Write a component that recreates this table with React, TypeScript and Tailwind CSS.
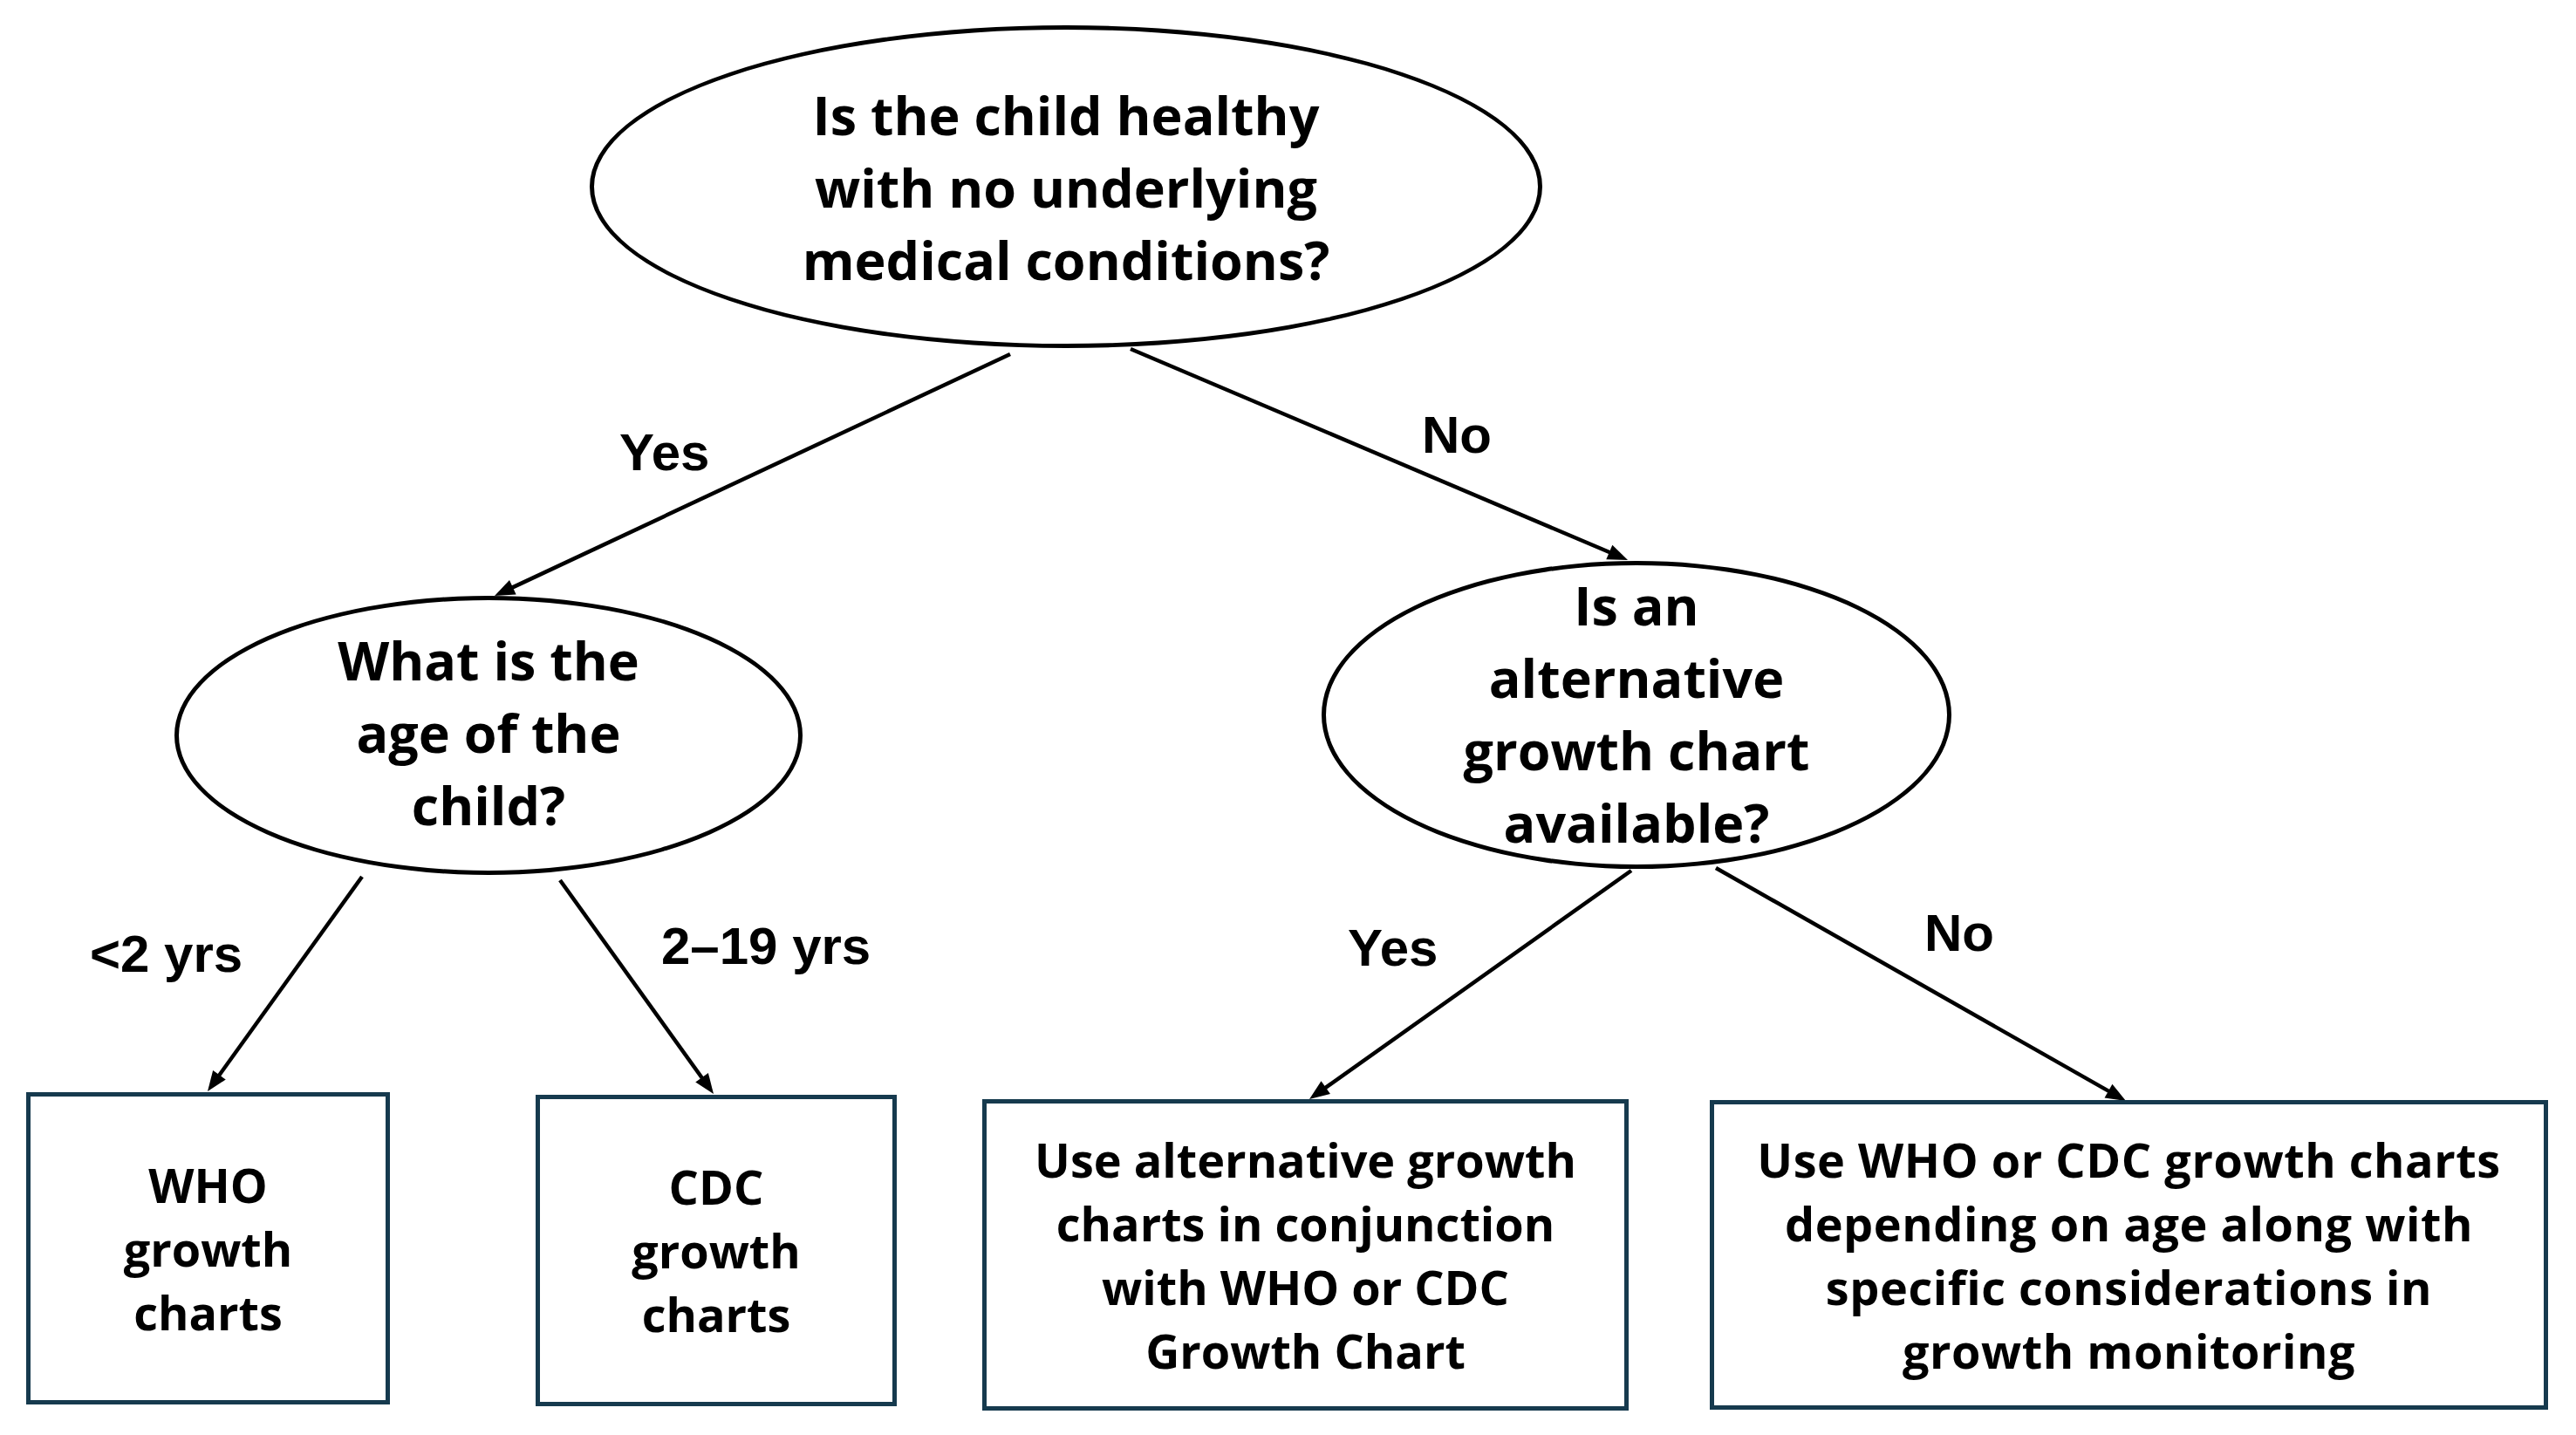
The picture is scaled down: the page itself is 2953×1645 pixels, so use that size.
import React from "react";

type Pt = { x1: number; y1: number; x2: number; y2: number };

const arrows: Pt[] = [
  { x1: 1158, y1: 406, x2: 567, y2: 683 },
  { x1: 1296, y1: 400, x2: 1866, y2: 642 },
  { x1: 415, y1: 1005, x2: 238, y2: 1251 },
  { x1: 642, y1: 1009, x2: 818, y2: 1254 },
  { x1: 1870, y1: 998, x2: 1501, y2: 1260 },
  { x1: 1967, y1: 995, x2: 2437, y2: 1262 },
];

function Arrow({ x1, y1, x2, y2 }: Pt) {
  const dx = x2 - x1;
  const dy = y2 - y1;
  const len = Math.hypot(dx, dy);
  const ux = dx / len;
  const uy = dy / len;
  const L = 23;
  const W = 9;
  const bx = x2 - ux * L;
  const by = y2 - uy * L;
  const px = -uy;
  const py = ux;
  const pts = `${x2},${y2} ${bx + px * W},${by + py * W} ${bx - px * W},${by - py * W}`;
  return (
    <g>
      <line x1={x1} y1={y1} x2={bx + ux * 2} y2={by + uy * 2} stroke="#000" strokeWidth={4.5} />
      <polygon points={pts} fill="#000" />
    </g>
  );
}

function Lines({ lines }: { lines: string[] }) {
  return (
    <div className="flex flex-col items-center">
      {lines.map((l) => (
        <span key={l} className="whitespace-nowrap">
          {l}
        </span>
      ))}
    </div>
  );
}

export default function App() {
  return (
    <div className="relative w-[2953px] h-[1645px] overflow-hidden bg-white text-black">
      <svg className="absolute inset-0" width={2953} height={1645} viewBox="0 0 2953 1645">
        {arrows.map((a, i) => (
          <Arrow key={i} {...a} />
        ))}
      </svg>

      {/* Top ellipse */}
      <div className="absolute left-[676px] top-[29px] w-[1092px] h-[370px] rounded-[50%] border-[5px] border-black flex items-center justify-center font-['Open_Sans',sans-serif] font-bold text-[61px] leading-[83px] text-center">
        <Lines lines={["Is the child healthy", "with no underlying", "medical conditions?"]} />
      </div>

      {/* Left ellipse */}
      <div className="absolute left-[200px] top-[683px] w-[720px] h-[320px] rounded-[50%] border-[5px] border-black flex items-center justify-center font-['Open_Sans',sans-serif] font-bold text-[61px] leading-[83px] text-center">
        <div className="-translate-y-[4px]">
          <Lines lines={["What is the", "age of the", "child?"]} />
        </div>
      </div>

      {/* Right ellipse */}
      <div className="absolute left-[1515px] top-[643px] w-[722px] h-[353px] rounded-[50%] border-[5px] border-black flex items-center justify-center font-['Open_Sans',sans-serif] font-bold text-[61px] leading-[83px] text-center">
        <div className="-translate-y-[2px]">
          <Lines lines={["Is an", "alternative", "growth chart", "available?"]} />
        </div>
      </div>

      {/* Boxes */}
      <div className="absolute left-[30px] top-[1252px] w-[417px] h-[358px] border-[5px] border-[#163a4e] flex items-center justify-center font-['Open_Sans',sans-serif] font-bold text-[54px] leading-[73px] text-center">
        <Lines lines={["WHO", "growth", "charts"]} />
      </div>
      <div className="absolute left-[614px] top-[1255px] w-[414px] h-[357px] border-[5px] border-[#163a4e] flex items-center justify-center font-['Open_Sans',sans-serif] font-bold text-[54px] leading-[73px] text-center">
        <Lines lines={["CDC", "growth", "charts"]} />
      </div>
      <div className="absolute left-[1126px] top-[1260px] w-[741px] h-[357px] border-[5px] border-[#163a4e] flex items-center justify-center font-['Open_Sans',sans-serif] font-bold text-[54px] leading-[73px] text-center">
        <Lines lines={["Use alternative growth", "charts in conjunction", "with WHO or CDC", "Growth Chart"]} />
      </div>
      <div className="absolute left-[1960px] top-[1261px] w-[961px] h-[355px] border-[5px] border-[#163a4e] flex items-center justify-center font-['Open_Sans',sans-serif] font-bold text-[54px] leading-[73px] tracking-[0.01em] text-center">
        <Lines
          lines={[
            "Use WHO or CDC growth charts",
            "depending on age along with",
            "specific considerations in",
            "growth monitoring",
          ]}
        />
      </div>

      {/* Labels */}
      <div className="absolute left-[710px] top-[489px] font-['Liberation_Sans',Arial,sans-serif] font-bold text-[60px] leading-none whitespace-nowrap">
        Yes
      </div>
      <div className="absolute left-[1630px] top-[469px] font-['Liberation_Sans',Arial,sans-serif] font-bold text-[60px] leading-none whitespace-nowrap">
        No
      </div>
      <div className="absolute left-[103px] top-[1064px] font-['Liberation_Sans',Arial,sans-serif] font-bold text-[60px] leading-none whitespace-nowrap">
        &lt;2 yrs
      </div>
      <div className="absolute left-[758px] top-[1055px] font-['Liberation_Sans',Arial,sans-serif] font-bold text-[60px] leading-none whitespace-nowrap">
        2–19 yrs
      </div>
      <div className="absolute left-[1545px] top-[1057px] font-['Liberation_Sans',Arial,sans-serif] font-bold text-[60px] leading-none whitespace-nowrap">
        Yes
      </div>
      <div className="absolute left-[2206px] top-[1040px] font-['Liberation_Sans',Arial,sans-serif] font-bold text-[60px] leading-none whitespace-nowrap">
        No
      </div>
    </div>
  );
}
